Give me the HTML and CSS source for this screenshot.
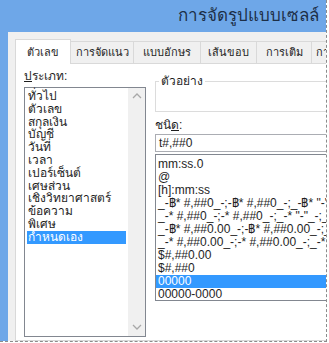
FILE: index.html
```html
<!DOCTYPE html>
<html lang="th">
<head>
  <meta charset="UTF-8">
  <title>การจัดรูปแบบเซลล์</title>
  <link rel="stylesheet" href="styles.css">
</head>
<body>
  <div class="frame">
    <!-- Title bar -->
    <div class="titlebar">การจัดรูปแบบเซลล์</div>

    <div class="window">
      <div class="edge"></div>
      <div class="dialog">
        <!-- Tabs -->
        <div class="tabs">
          <div class="tab active">ตัวเลข</div>
          <div class="tab">การจัดแนว</div>
          <div class="tab">แบบอักษร</div>
          <div class="tab">เส้นขอบ</div>
          <div class="tab">การเติม</div>
          <div class="tab last">การป้องกัน</div>
        </div>

        <div class="panel">
          <!-- Category list -->
          <div class="category">
            <div class="label"><u>ป</u>ระเภท:</div>
            <div class="listbox">
              <div class="items">
                <div class="item">ทั่วไป</div>
                <div class="item">ตัวเลข</div>
                <div class="item">สกุลเงิน</div>
                <div class="item">บัญชี</div>
                <div class="item">วันที่</div>
                <div class="item">เวลา</div>
                <div class="item">เปอร์เซ็นต์</div>
                <div class="item">เศษส่วน</div>
                <div class="item">เชิงวิทยาศาสตร์</div>
                <div class="item">ข้อความ</div>
                <div class="item">พิเศษ</div>
                <div class="item selected">กำหนดเอง</div>
              </div>
              <div class="scrollbar">
                <svg viewBox="0 0 10 6" width="10" height="6"><path d="M1 5 L5 1 L9 5" fill="none" stroke="#a8a8a8" stroke-width="1.3"/></svg>
                <svg viewBox="0 0 10 6" width="10" height="6"><path d="M1 1 L5 5 L9 1" fill="none" stroke="#a8a8a8" stroke-width="1.3"/></svg>
              </div>
            </div>
          </div>

          <!-- Format details -->
          <div class="details">
            <div class="sample">
              <span class="legend">ตัวอย่าง</span>
            </div>
            <div class="label">ชนิ<u>ด</u>:</div>
            <div class="textbox">t#,##0</div>
            <div class="formats">
              <div class="fmt">mm:ss.0</div>
              <div class="fmt">@</div>
              <div class="fmt">[h]:mm:ss</div>
              <div class="fmt">_-฿* #,##0_-;-฿* #,##0_-;_-฿* "-"_-;_-@_-</div>
              <div class="fmt">_-* #,##0_-;-* #,##0_-;_-* "-"_-;_-@_-</div>
              <div class="fmt">_-฿* #,##0.00_-;-฿* #,##0.00_-;_-฿* "-"??_-</div>
              <div class="fmt">_-* #,##0.00_-;-* #,##0.00_-;_-* "-"??_-</div>
              <div class="fmt">$#,##0.00</div>
              <div class="fmt">$#,##0</div>
              <div class="fmt selected">00000</div>
              <div class="fmt">00000-0000</div>
            </div>
          </div>
        </div>
      </div>
    </div>
  </div>
</body>
</html>
```

FILE: styles.css
```css
* {
  margin: 0;
  padding: 0;
  box-sizing: border-box;
}

body {
  width: 329px;
  height: 343px;
  background-color: #ffffff;
  font-family: Tahoma, "Liberation Sans", "Noto Sans", sans-serif;
  font-size: 12px;
  color: #1e1e1e;
  overflow: hidden;
}

/* Outer crop with dashed edges */
.frame {
  width: 327px;
  height: 342px;
  border-right: 1px dashed #8c8c8c;
  border-bottom: 1px dashed #8c8c8c;
  display: flex;
  flex-direction: column;
  overflow: hidden;
}

.titlebar {
  height: 32px;
  flex-shrink: 0;
  background-color: #6ea7e8;
  color: #1d2f47;
  font-size: 17px;
  line-height: 32px;
  text-align: right;
  padding-right: 7px;
  white-space: nowrap;
}

.window {
  flex: 1;
  display: flex;
  min-height: 0;
}

.edge {
  width: 8px;
  flex-shrink: 0;
  background-color: #6ea7e8;
}

.dialog {
  flex: 1;
  background-color: #f0f0f0;
  padding: 6px 0 0 7px;
  display: flex;
  flex-direction: column;
  min-width: 0;
  overflow: hidden;
}

/* Tabs */
.tabs {
  display: flex;
  height: 25px;
  align-items: flex-end;
  white-space: nowrap;
}

.tab {
  height: 22px;
  line-height: 21px;
  border: 1px solid #d9d9d9;
  border-bottom: none;
  border-left: none;
  background-color: #f0f0f0;
  font-size: 11px;
  text-align: center;
  flex-shrink: 0;
  overflow: hidden;
}

.tab:nth-child(2) { width: 63px; }
.tab:nth-child(3) { width: 67px; }
.tab:nth-child(4) { width: 56px; }
.tab:nth-child(5) { width: 55px; }

.tab.last {
  text-align: left;
  padding-left: 4px;
  width: 60px;
}

.tab.active {
  height: 25px;
  width: 56px;
  background-color: #ffffff;
  border-left: 1px solid #d9d9d9;
  line-height: 24px;
  margin-bottom: -1px;
  position: relative;
}

.panel {
  flex: 1;
  background-color: #ffffff;
  border: 1px solid #d9d9d9;
  border-right: none;
  display: flex;
  gap: 9px;
  padding: 4px 0 0 8px;
  min-height: 0;
}

.label {
  height: 16px;
  line-height: 16px;
  white-space: nowrap;
}

/* Category list */
.category {
  width: 122px;
  flex-shrink: 0;
  display: flex;
  flex-direction: column;
  gap: 3px;
}

.listbox {
  height: 250px;
  border: 1px solid #828790;
  display: flex;
}

.items {
  flex: 1;
  padding: 2px 2px 0 2px;
}

.item {
  height: 12.8px;
  line-height: 12.8px;
  padding-left: 1px;
  white-space: nowrap;
}

.item.selected,
.fmt.selected {
  background-color: #3399ff;
  color: #ffffff;
}

.scrollbar {
  width: 17px;
  background-color: #f0f0f0;
  display: flex;
  flex-direction: column;
  justify-content: space-between;
  align-items: center;
  padding: 5px 0 6px;
}

/* Format details */
.details {
  flex: 1;
  display: flex;
  flex-direction: column;
  min-width: 0;
  padding-top: 13px;
}

.sample {
  height: 31px;
  border: 1px solid #dcdcdc;
  border-right: none;
  margin-bottom: 5px;
  position: relative;
}

.legend {
  position: absolute;
  top: -8px;
  left: 3px;
  padding: 0 2px;
  background-color: #ffffff;
  line-height: 14px;
}

.textbox {
  height: 18px;
  margin-top: 1px;
  border: 1px solid #abadb3;
  border-right: none;
  line-height: 16px;
  padding-left: 3px;
}

.formats {
  height: 147px;
  margin-top: 2px;
  border: 1px solid #828790;
  border-right: none;
  padding-top: 3px;
  overflow: hidden;
}

.fmt {
  height: 13px;
  line-height: 13px;
  padding-left: 2px;
  white-space: nowrap;
}
```
